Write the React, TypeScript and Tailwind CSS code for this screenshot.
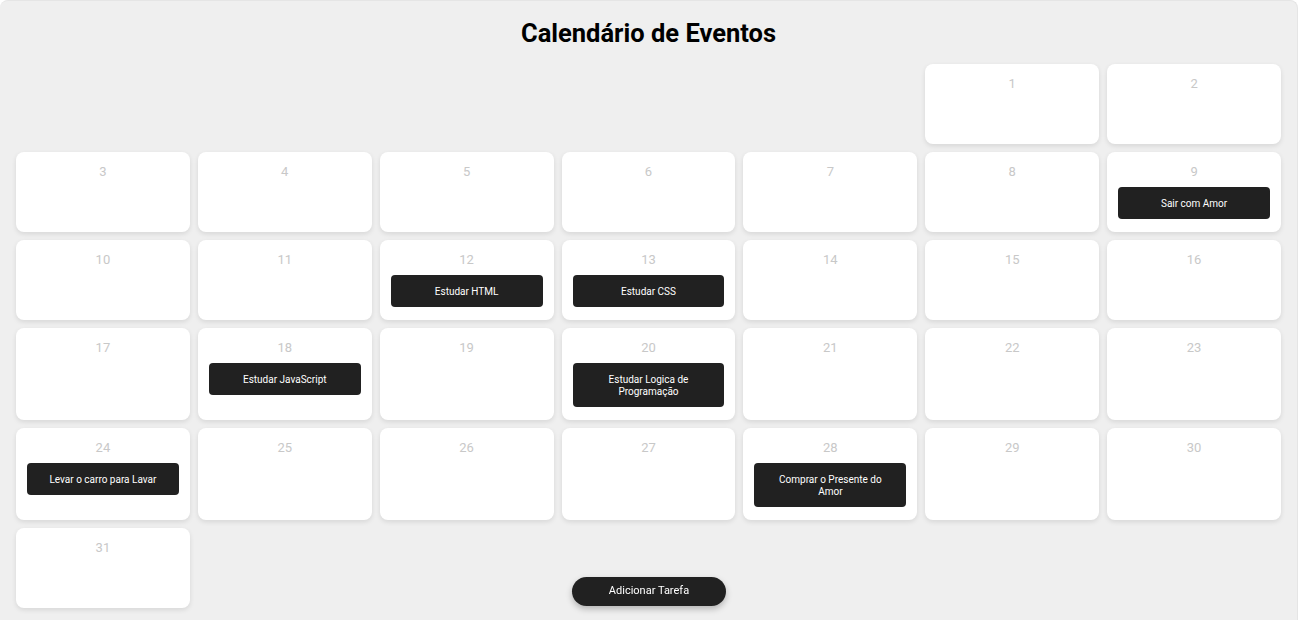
import React from "react"

const events: Record<number, string> = {
  9: "Sair com Amor",
  12: "Estudar HTML",
  13: "Estudar CSS",
  18: "Estudar JavaScript",
  20: "Estudar Logica de Programação",
  24: "Levar o carro para Lavar",
  28: "Comprar o Presente do Amor",
}

export default function App() {
  const blanks = Array.from({ length: 5 })
  const days = Array.from({ length: 31 }, (_, i) => i + 1)

  return (
    <div className="min-h-screen bg-white font-['Roboto',sans-serif]">
      <div className="relative w-[1298px] min-h-[640px] bg-[#efefef] border-t border-r border-[#e5e5e5] rounded-lg px-4 pt-[15px] pb-6">
        <h1 className="text-center text-[25.5px] leading-[34px] font-bold text-black mb-[14px]">
          Calendário de Eventos
        </h1>

        <div className="grid grid-cols-7 gap-2">
          {blanks.map((_, i) => (
            <div key={"b" + i} />
          ))}
          {days.map((d) => (
            <div
              key={d}
              className="min-h-[80px] bg-white rounded-lg shadow-[0_2px_5px_rgba(0,0,0,0.1)] px-[11px] pt-[10px] pb-[13px] flex flex-col items-center"
            >
              <span className="text-[13px] leading-[20px] text-[#c8c8c8]">{d}</span>
              {events[d] && (
                <div className="mt-[5px] w-full bg-[#212121] text-white text-[10px] leading-[12px] text-center rounded px-4 pt-[11px] pb-[9px]">
                  {events[d]}
                </div>
              )}
            </div>
          ))}
        </div>
      </div>

      <button className="fixed bottom-[14px] left-[572px] w-[154px] h-[29px] rounded-full bg-[#212121] text-white text-[11px] shadow-[0_3px_6px_rgba(0,0,0,0.25)]">
        Adicionar Tarefa
      </button>
    </div>
  )
}
